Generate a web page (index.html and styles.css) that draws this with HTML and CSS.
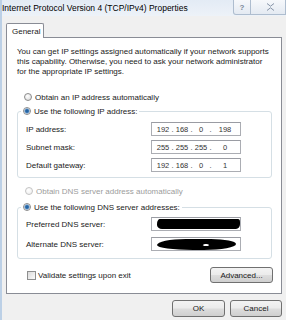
FILE: index.html
```html
<!DOCTYPE html>
<html lang="en">
<head>
    <meta charset="UTF-8">
    <meta name="viewport" content="width=device-width, initial-scale=1.0">
    <title>Internet Protocol Version 4 (TCP/IPv4) Properties</title>
    <link rel="stylesheet" href="styles.css">
</head>
<body>
    <div class="window">
        <div class="titlebar">
            <span class="title">Internet Protocol Version 4 (TCP/IPv4) Properties</span>
            <div class="caption">
                <span class="cap-btn cap-help">?</span>
                <span class="cap-btn cap-close">
                    <svg width="9" height="8" viewBox="0 0 9 8">
                        <path d="M1 0.5 L4.5 3.2 L8 0.5 M1 7.5 L4.5 4.8 L8 7.5" fill="none" stroke="#8593a6" stroke-width="1"/>
                    </svg>
                </span>
            </div>
        </div>

        <div class="client">
            <div class="tabstrip">
                <span class="tab">General</span>
            </div>

            <div class="panel">
                <p class="intro">You can get IP settings assigned automatically if your network supports<br>this capability. Otherwise, you need to ask your network administrator<br>for the appropriate IP settings.</p>

                <div class="opt opt-first">
                    <span class="radio"></span>Obtain an IP address automatically
                </div>

                <fieldset class="group group-ip">
                    <legend><span class="opt"><span class="radio on"></span>Use the following IP address:</span></legend>
                    <div class="field">
                        <label>IP address:</label>
                        <div class="ipbox">
                            <span class="oct">192</span><span class="dot">.</span><span class="oct">168</span><span class="dot">.</span><span class="oct">0</span><span class="dot">.</span><span class="oct last">198</span>
                        </div>
                    </div>
                    <div class="field">
                        <label>Subnet mask:</label>
                        <div class="ipbox">
                            <span class="oct">255</span><span class="dot">.</span><span class="oct">255</span><span class="dot">.</span><span class="oct">255</span><span class="dot">.</span><span class="oct last">0</span>
                        </div>
                    </div>
                    <div class="field">
                        <label>Default gateway:</label>
                        <div class="ipbox">
                            <span class="oct">192</span><span class="dot">.</span><span class="oct">168</span><span class="dot">.</span><span class="oct">0</span><span class="dot">.</span><span class="oct last">1</span>
                        </div>
                    </div>
                </fieldset>

                <div class="opt opt-dns disabled">
                    <span class="radio"></span>Obtain DNS server address automatically
                </div>

                <fieldset class="group group-dns">
                    <legend><span class="opt"><span class="radio on"></span>Use the following DNS server addresses:</span></legend>
                    <div class="field">
                        <label>Preferred DNS server:</label>
                        <div class="ipbox"><span class="redact"></span></div>
                    </div>
                    <div class="field">
                        <label>Alternate DNS server:</label>
                        <div class="ipbox"><span class="redact redact-2"></span></div>
                    </div>
                </fieldset>

                <div class="foot">
                    <span class="check"><span class="box"></span>Validate settings upon exit</span>
                    <button class="btn btn-adv">Advanced...</button>
                </div>
            </div>

            <div class="actions">
                <button class="btn btn-ok">OK</button>
                <button class="btn btn-cancel">Cancel</button>
            </div>
        </div>
    </div>
</body>
</html>
```

FILE: styles.css
```css
* {
    box-sizing: border-box;
}
body {
    margin: 0;
    background-color: #f0f0f0;
    font-family: "Liberation Sans", Arial, sans-serif;
    font-size: 8px;
    color: #1a1a1a;
}
.window {
    width: 286px;
    height: 320px;
    overflow: hidden;
    display: flex;
    flex-direction: column;
    border-left: 2px solid #bcd0e6;
    background-color: #f0f0f0;
}
.titlebar {
    height: 16px;
    flex: none;
    display: flex;
    background: linear-gradient(#e3ebf5, #edf2f8);
}
.title {
    padding-top: 3px;
    font-size: 8.5px;
    color: #000;
    white-space: nowrap;
}
.caption {
    margin-left: auto;
    display: flex;
    align-items: flex-start;
}
.cap-btn {
    height: 15px;
    border: 1px solid #aebdcf;
    border-top: none;
    background: linear-gradient(#f6f8fb, #e4eaf2);
    display: flex;
    align-items: center;
    justify-content: center;
    color: #7b889a;
}
.cap-help {
    width: 18px;
    border-radius: 0 0 0 3px;
    font-size: 8px;
    font-weight: bold;
}
.cap-close {
    width: 35px;
    border-left: none;
    justify-content: flex-start;
    padding-left: 15px;
}
.client {
    flex: 1;
    padding: 7px 0 0 4px;
    display: flex;
    flex-direction: column;
}
.tabstrip {
    display: flex;
    height: 15px;
    margin-bottom: -1px;
    position: relative;
    z-index: 1;
}
.tab {
    width: 38px;
    border: 1px solid #898c95;
    border-bottom: none;
    border-radius: 2px 2px 0 0;
    background-color: #fff;
    padding: 3px 0 0 5px;
}
.panel {
    width: 276px;
    height: 257px;
    flex: none;
    border: 1px solid #898c95;
    background-color: #fff;
    padding: 9px 8px 0 10px;
    display: flex;
    flex-direction: column;
}
.intro {
    margin: 0;
    line-height: 10px;
    white-space: nowrap;
}
.opt {
    display: flex;
    align-items: center;
    height: 10px;
    gap: 3px;
    white-space: nowrap;
}
.opt-first {
    margin: 15px 0 0 7px;
}
.opt-dns {
    margin: 8px 0 0 8px;
}
.disabled {
    color: #9c9c9c;
}
.radio {
    width: 8px;
    height: 8px;
    flex: none;
    border-radius: 50%;
    border: 1px solid #8c8c8c;
    background: radial-gradient(circle at 40% 35%, #fff, #d6d6d6);
}
.radio.on {
    background: radial-gradient(circle, #1f5f9e 0, #2b6aa8 1.4px, #8fb6de 2.4px, #f2f2f2 3px);
}
.disabled .radio {
    border-color: #c4c4c4;
    background: radial-gradient(circle at 40% 35%, #fff, #ececec);
}
.group {
    width: 255px;
    margin: 4px 0 0 0;
    min-inline-size: 0;
    border: 1px solid #d5dfe5;
    border-radius: 3px;
    padding: 0 0 5px 3px;
}
.group legend {
    padding: 0 2px;
}
.group-dns {
    margin-top: 6px;
    padding-bottom: 7px;
}
.field {
    display: flex;
    align-items: center;
    height: 14px;
    margin-top: 4px;
}
.field:first-of-type {
    margin-top: 6px;
}
.group-dns .field {
    margin-top: 6px;
}
.group-dns .field:first-of-type {
    margin-top: 5px;
}
.field label {
    width: 130px;
    padding-left: 5px;
    white-space: nowrap;
}
.ipbox {
    width: 90px;
    height: 14px;
    border: 1px solid #abadb3;
    border-top-color: #9a9ca3;
    background-color: #fff;
    display: flex;
    align-items: center;
    padding-left: 4px;
    font-size: 7.5px;
    color: #333;
}
.oct {
    width: 14px;
    text-align: center;
}
.oct.last {
    width: 24px;
}
.dot {
    width: 5px;
    text-align: center;
}
.redact {
    width: 84px;
    height: 10px;
    margin-left: 1px;
    background-color: #000;
    border-radius: 3px 2px 4px 5px / 5px 3px 5px 4px;
}
.redact-2 {
    width: 79px;
    height: 11px;
    border-radius: 40% 35% 45% 50% / 60% 50% 60% 50%;
    background: radial-gradient(ellipse 4px 1px at 62% 55%, #fff 60%, transparent 100%), #000;
}
.foot {
    display: flex;
    align-items: center;
    margin-top: 8px;
}
.check {
    display: flex;
    align-items: center;
    gap: 2px;
    margin-left: 10px;
    white-space: nowrap;
}
.box {
    width: 9px;
    height: 9px;
    border: 1px solid #8e8f8f;
    background: linear-gradient(135deg, #dadada, #fbfbfb);
}
.btn {
    height: 16px;
    padding: 0;
    border: 1px solid #707070;
    border-radius: 3px;
    background: linear-gradient(#f3f3f3 0%, #ebebeb 48%, #dddddd 52%, #cfcfcf 100%);
    font-family: inherit;
    font-size: 8px;
    color: #1a1a1a;
}
.btn-adv {
    width: 63px;
    margin-left: auto;
}
.actions {
    width: 276px;
    margin-top: 6px;
    display: flex;
    justify-content: flex-end;
    gap: 5px;
}
.btn-ok {
    width: 53px;
    height: 17px;
}
.btn-cancel {
    width: 52px;
    height: 17px;
}
```
